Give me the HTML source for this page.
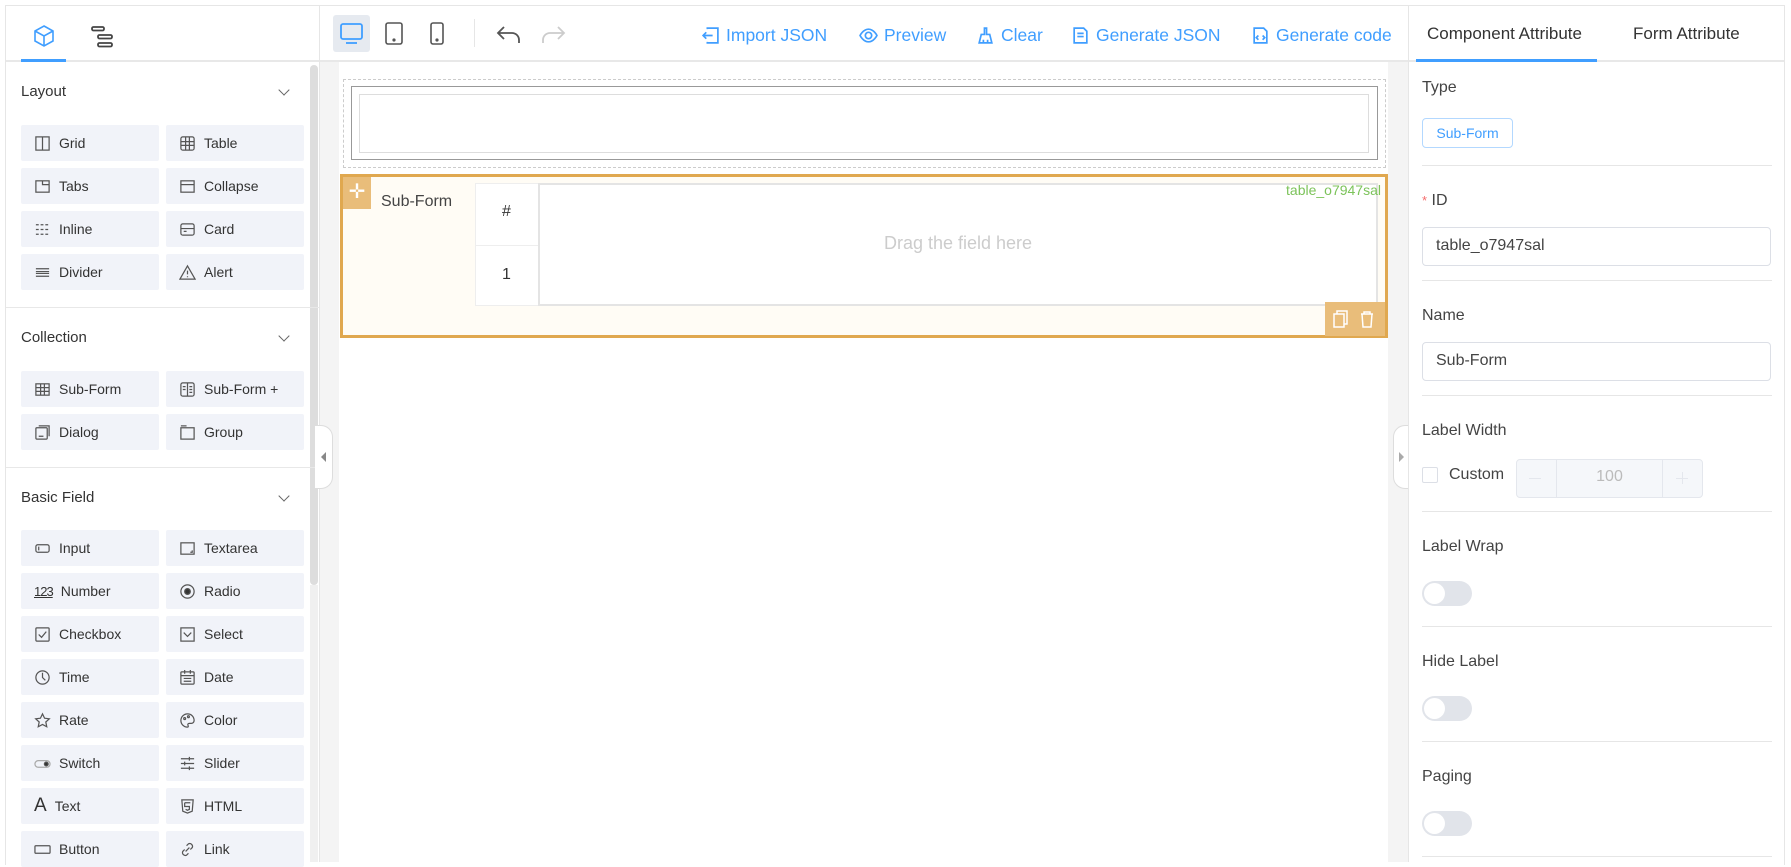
<!DOCTYPE html>
<html><head><meta charset="utf-8"><style>
*{box-sizing:border-box;margin:0;padding:0}
body{width:1791px;height:862px;overflow:hidden;background:#fff;font-family:"Liberation Sans",sans-serif;color:#333;position:relative}
.a{position:absolute}
.btn{position:absolute;width:138px;height:36px;background:#f1f3f9;border-radius:2px;font-size:14px;color:#333;display:flex;align-items:center;padding-left:13px}
.btn svg{width:17px;height:17px;margin-right:8px;fill:none;stroke:#555;stroke-width:1.3}
.sec{position:absolute;left:21px;font-size:15px;color:#333}
.chev{position:absolute;left:280px;width:8px;height:8px;border-right:1.3px solid #666;border-bottom:1.3px solid #666;transform:rotate(45deg)}
.hl{position:absolute;left:6px;width:313px;height:1px;background:#e8e8e8}
.tb{position:absolute;top:25px;font-size:17.5px;color:#409eff;display:flex;align-items:center;white-space:nowrap}
.tb svg{width:19px;height:19px;margin-right:6px;fill:none;stroke:#409eff;stroke-width:1.6}
.lbl{position:absolute;left:1422px;font-size:16px;color:#444}
.sep{position:absolute;left:1422px;width:350px;height:1px;background:#e6e6e6}
.inp{position:absolute;left:1422px;width:349px;height:39px;border:1px solid #dcdfe6;border-radius:4px;font-size:16px;color:#444;padding:9px 0 0 13px}
.sw{position:absolute;left:1422px;width:50px;height:25px;border-radius:13px;background:#e1e4ea}
.sw:after{content:"";position:absolute;left:2px;top:2px;width:21px;height:21px;border-radius:50%;background:#fff}
</style></head><body>
<div class="a" style="left:5px;top:5px;width:1780px;height:860px;border:1px solid #e6e6e6;border-bottom:none"></div>
<div class="a" style="left:319px;top:5px;width:1px;height:857px;background:#e6e6e6"></div>
<div class="a" style="left:6px;top:60px;width:313px;height:2px;background:#e8e8e8"></div>
<div class="a" style="left:21px;top:59px;width:45px;height:3px;background:#409eff"></div>
<svg class="a" style="left:32px;top:24px" width="24" height="24" viewBox="0 0 24 24" fill="none" stroke="#409eff" stroke-width="1.6"><path d="M12 2l9 5v10l-9 5-9-5V7z M3 7l9 5 9-5 M12 12v10"/></svg>
<svg class="a" style="left:90px;top:25px" width="26" height="24" viewBox="0 0 26 24" fill="none" stroke="#444" stroke-width="1.8"><rect x="2" y="2" width="12" height="3.5" rx="1.5"/><rect x="8" y="10" width="14" height="3.5" rx="1.5"/><rect x="8" y="18" width="14" height="3.5" rx="1.5"/></svg>
<div class="a" style="left:310px;top:65px;width:8px;height:520px;background:#ddd;border-radius:4px"></div>
<div class="a" style="left:310px;top:585px;width:8px;height:277px;background:#f0f0f0"></div>

<div class="sec" style="top:83px">Layout</div><div class="chev" style="top:86px"></div>
<div class="btn" style="left:21px;top:125px"><svg viewBox="0 0 18 18"><rect x="2" y="2" width="14" height="14"/><path d="M9 2v14"/></svg>Grid</div>
<div class="btn" style="left:166px;top:125px"><svg viewBox="0 0 18 18"><rect x="2" y="2" width="14" height="14" rx="2"/><path d="M2 7h14M2 11h14M7 2v14M11 2v14"/></svg>Table</div>
<div class="btn" style="left:21px;top:168px"><svg viewBox="0 0 18 18"><rect x="2" y="3" width="14" height="12"/><path d="M9 3v4h7"/></svg>Tabs</div>
<div class="btn" style="left:166px;top:168px"><svg viewBox="0 0 18 18"><rect x="2" y="3" width="14" height="12"/><path d="M2 7h14"/></svg>Collapse</div>
<div class="btn" style="left:21px;top:211px"><svg viewBox="0 0 18 18"><path d="M2 4h14M2 9h14M2 14h14" stroke-dasharray="3 2"/></svg>Inline</div>
<div class="btn" style="left:166px;top:211px"><svg viewBox="0 0 18 18"><rect x="2" y="3" width="14" height="12" rx="2"/><path d="M2 8h14M5 11h3"/></svg>Card</div>
<div class="btn" style="left:21px;top:254px"><svg viewBox="0 0 18 18" stroke-width="1"><path d="M2 5h14M2 8h14M2 10h14M2 13h14"/></svg>Divider</div>
<div class="btn" style="left:166px;top:254px"><svg viewBox="0 0 18 18"><path d="M9 2l8 14H1z M9 7v4 M9 13v1"/></svg>Alert</div>
<div class="hl" style="top:307px"></div>

<div class="sec" style="top:329px">Collection</div><div class="chev" style="top:332px"></div>
<div class="btn" style="left:21px;top:371px"><svg viewBox="0 0 18 18"><rect x="2" y="3" width="14" height="12"/><path d="M2 7h14M2 11h14M7 3v12M11 3v12"/></svg>Sub-Form</div>
<div class="btn" style="left:166px;top:371px"><svg viewBox="0 0 18 18"><rect x="2" y="2" width="14" height="14" rx="2"/><path d="M9 2v14M11 6h3M11 9h3M11 12h3M4 6h3M4 9h3"/></svg>Sub-Form +</div>
<div class="btn" style="left:21px;top:414px"><svg viewBox="0 0 18 18"><rect x="2" y="4" width="12" height="12" rx="1"/><path d="M5 2h11v11M5 13h5"/></svg>Dialog</div>
<div class="btn" style="left:166px;top:414px"><svg viewBox="0 0 18 18"><rect x="2" y="4" width="14" height="12"/><path d="M2 2h6"/></svg>Group</div>
<div class="hl" style="top:467px"></div>

<div class="sec" style="top:489px">Basic Field</div><div class="chev" style="top:492px"></div>
<div class="btn" style="left:21px;top:530px"><svg viewBox="0 0 18 18"><rect x="2" y="5" width="14" height="8" rx="2"/><path d="M5 7v4"/></svg>Input</div>
<div class="btn" style="left:166px;top:530px"><svg viewBox="0 0 18 18"><rect x="2" y="3" width="14" height="12"/><path d="M12 13h2v-2"/></svg>Textarea</div>
<div class="btn" style="left:21px;top:573px"><span style="font-size:13px;text-decoration:underline;margin-right:8px;letter-spacing:-1px">123</span>Number</div>
<div class="btn" style="left:166px;top:573px"><svg viewBox="0 0 18 18"><circle cx="9" cy="9" r="7"/><circle cx="9" cy="9" r="3" fill="#333"/></svg>Radio</div>
<div class="btn" style="left:21px;top:616px"><svg viewBox="0 0 18 18"><rect x="2" y="2" width="14" height="14" rx="1"/><path d="M5 9l3 3 5-6"/></svg>Checkbox</div>
<div class="btn" style="left:166px;top:616px"><svg viewBox="0 0 18 18"><rect x="2" y="2" width="14" height="14"/><path d="M5 7l4 4 4-4"/></svg>Select</div>
<div class="btn" style="left:21px;top:659px"><svg viewBox="0 0 18 18"><circle cx="9" cy="9" r="7"/><path d="M9 4v5l3 3"/></svg>Time</div>
<div class="btn" style="left:166px;top:659px"><svg viewBox="0 0 18 18"><rect x="2" y="3" width="14" height="13" rx="1"/><path d="M2 7h14M6 1v4M12 1v4M5 10h8M5 13h8"/></svg>Date</div>
<div class="btn" style="left:21px;top:702px"><svg viewBox="0 0 18 18"><path d="M9 2l2.2 4.6 5 .6-3.7 3.4 1 5L9 13.2 4.5 15.6l1-5L1.8 7.2l5-.6z"/></svg>Rate</div>
<div class="btn" style="left:166px;top:702px"><svg viewBox="0 0 18 18"><path d="M9 2a7 7 0 100 14c1 0 1-1 .5-2s0-2 1.5-2h2a3 3 0 003-3c0-4-3-7-7-7z"/><circle cx="6" cy="7" r="1"/><circle cx="10" cy="5" r="1"/></svg>Color</div>
<div class="btn" style="left:21px;top:745px"><svg viewBox="0 0 18 18"><rect x="1" y="6" width="16" height="7" rx="3.5" stroke="#aaa"/><circle cx="13" cy="9.5" r="2" fill="#333"/></svg>Switch</div>
<div class="btn" style="left:166px;top:745px"><svg viewBox="0 0 18 18"><path d="M2 4h14M2 9h14M2 14h14M11 2v4M6 7v4M11 12v4"/></svg>Slider</div>
<div class="btn" style="left:21px;top:788px"><span style="font-size:19px;margin-right:8px">A</span>Text</div>
<div class="btn" style="left:166px;top:788px"><svg viewBox="0 0 18 18"><path d="M3 2h12l-1 12-5 2-5-2z M6 5h6M6 5v4h5v3l-2 1-2-1"/></svg>HTML</div>
<div class="btn" style="left:21px;top:831px"><svg viewBox="0 0 18 18"><rect x="1" y="5" width="16" height="8" rx="1"/></svg>Button</div>
<div class="btn" style="left:166px;top:831px"><svg viewBox="0 0 18 18"><path d="M7 11l4-4M8 5l2-2a3 3 0 014 4l-2 2M10 13l-2 2a3 3 0 01-4-4l2-2"/></svg>Link</div>

<div class="a" style="left:320px;top:61px;width:1088px;height:801px;background:#f4f4f4"></div>
<div class="a" style="left:320px;top:60px;width:1088px;height:2px;background:#e8e8e8"></div>
<div class="a" style="left:339px;top:62px;width:1049px;height:800px;background:#fff"></div>
<div class="a" style="left:333px;top:15px;width:37px;height:37px;background:#e6eaf0;border-radius:3px"></div>
<svg class="a" style="left:339px;top:21px" width="25" height="25" viewBox="0 0 25 25" fill="none" stroke="#409eff" stroke-width="1.8"><rect x="2" y="3" width="21" height="15" rx="2"/><path d="M7 22h11"/></svg>
<svg class="a" style="left:384px;top:21px" width="20" height="25" viewBox="0 0 20 25" fill="none" stroke="#555" stroke-width="1.6"><rect x="2" y="2" width="16" height="21" rx="2"/><circle cx="10" cy="19" r=".8" fill="#555"/></svg>
<svg class="a" style="left:429px;top:21px" width="16" height="25" viewBox="0 0 16 25" fill="none" stroke="#555" stroke-width="1.6"><rect x="2" y="2" width="12" height="21" rx="2"/><circle cx="8" cy="19" r=".8" fill="#555"/></svg>
<div class="a" style="left:474px;top:19px;width:1px;height:28px;background:#e6e6e6"></div>
<svg class="a" style="left:496px;top:24px" width="26" height="22" viewBox="0 0 26 22" fill="none" stroke="#555" stroke-width="1.8"><path d="M8 3L2 9l6 6M2 9h14a7 7 0 017 7v3"/></svg>
<svg class="a" style="left:540px;top:24px" width="26" height="22" viewBox="0 0 26 22" fill="none" stroke="#ccc" stroke-width="1.8"><path d="M18 3l6 6-6 6M24 9H10a7 7 0 00-7 7v3"/></svg>
<div class="tb" style="left:701px"><svg viewBox="0 0 18 18"><path d="M6 3V2h10v14H6v-1M11 9H2M5 6L2 9l3 3"/></svg>Import JSON</div>
<div class="tb" style="left:859px"><svg viewBox="0 0 18 18"><path d="M1 9s3-6 8-6 8 6 8 6-3 6-8 6-8-6-8-6z"/><circle cx="9" cy="9" r="3"/></svg>Preview</div>
<div class="tb" style="left:976px"><svg viewBox="0 0 18 18"><path d="M8 2h2v6h3l2 8H3l2-8h3zM7 16v-3M11 16v-3"/></svg>Clear</div>
<div class="tb" style="left:1071px"><svg viewBox="0 0 18 18"><path d="M3 2h9l3 3v11H3z M6 7h6M6 10h6"/></svg>Generate JSON</div>
<div class="tb" style="left:1251px"><svg viewBox="0 0 18 18"><path d="M3 2h9l3 3v11H3z M7 9l-2 2 2 2M11 9l2 2-2 2"/></svg>Generate code</div>

<div class="a" style="left:343px;top:79px;width:1043px;height:89px;border:1px dashed #ccc"></div>
<div class="a" style="left:351px;top:86px;width:1027px;height:74px;border:1px solid #999"></div>
<div class="a" style="left:359px;top:94px;width:1010px;height:59px;border:1px solid #ddd"></div>
<div class="a" style="left:340px;top:174px;width:1048px;height:164px;border:3px solid #e0a84f;background:#fffcf5"></div>
<div class="a" style="left:343px;top:177px;width:28px;height:32px;background:#e9bd7a;color:#fff;font-size:20px;text-align:center;line-height:30px">✛</div>
<div class="a" style="left:381px;top:193px;font-size:16px;color:#444">Sub-Form</div>
<div class="a" style="left:475px;top:183px;width:64px;height:123px;background:#fff;border:1px solid #eee"></div>
<div class="a" style="left:475px;top:245px;width:64px;height:1px;background:#eee"></div>
<div class="a" style="left:475px;top:203px;width:63px;text-align:center;font-size:16px">#</div>
<div class="a" style="left:475px;top:266px;width:63px;text-align:center;font-size:16px">1</div>
<div class="a" style="left:538px;top:183px;width:840px;height:123px;background:#fff;border:2px solid #e4e4e4"></div>
<div class="a" style="left:538px;top:233px;width:840px;text-align:center;font-size:18px;color:#ccc">Drag the field here</div>
<div class="a" style="left:1200px;top:182px;width:181px;text-align:right;font-size:14px;color:#7cc35a">table_o7947sal</div>
<div class="a" style="left:1325px;top:302px;width:60px;height:34px;background:#e9bd7a"></div>
<svg class="a" style="left:1330px;top:309px" width="50" height="20" viewBox="0 0 50 20" fill="none" stroke="#fff" stroke-width="1.5"><rect x="4" y="5" width="10" height="13"/><path d="M7 5V2h10v13h-3"/><path d="M31 5h12M34 5V3h6v2M32 5l1 13h8l1-13"/></svg>
<div class="a" style="left:315px;top:425px;width:18px;height:64px;border:1px solid #ddd;border-left:none;border-radius:0 12px 12px 0;background:#fff"></div>
<div class="a" style="left:321px;top:452px;width:0;height:0;border-top:5px solid transparent;border-bottom:5px solid transparent;border-right:5px solid #888"></div>
<div class="a" style="left:1393px;top:425px;width:16px;height:64px;border:1px solid #ddd;border-right:none;border-radius:12px 0 0 12px;background:#fff"></div>
<div class="a" style="left:1399px;top:452px;width:0;height:0;border-top:5px solid transparent;border-bottom:5px solid transparent;border-left:5px solid #aaa"></div>

<div class="a" style="left:1408px;top:5px;width:1px;height:857px;background:#e6e6e6"></div>
<div class="a" style="left:1409px;top:60px;width:375px;height:2px;background:#e8e8e8"></div>
<div class="a" style="left:1416px;top:59px;width:181px;height:3px;background:#409eff"></div>
<div class="a" style="left:1427px;top:24px;font-size:17px;color:#333">Component Attribute</div>
<div class="a" style="left:1633px;top:24px;font-size:17px;color:#333">Form Attribute</div>
<div class="lbl" style="top:79px">Type</div>
<div class="a" style="left:1422px;top:118px;width:91px;height:30px;border:1px solid #b3d8ff;border-radius:4px;background:#fff;color:#409eff;font-size:14px;text-align:center;line-height:28px">Sub-Form</div>
<div class="sep" style="top:165px"></div>
<div class="lbl" style="top:192px"><span style="color:#f56c6c;font-size:13px">*</span> ID</div>
<div class="inp" style="top:227px">table_o7947sal</div>
<div class="sep" style="top:280px"></div>
<div class="lbl" style="top:307px">Name</div>
<div class="inp" style="top:342px">Sub-Form</div>
<div class="sep" style="top:395px"></div>
<div class="lbl" style="top:422px">Label Width</div>
<div class="a" style="left:1422px;top:467px;width:16px;height:16px;border:1px solid #dcdfe6;border-radius:2px"></div>
<div class="a" style="left:1449px;top:466px;font-size:16px;color:#444">Custom</div>
<div class="a" style="left:1516px;top:459px;width:187px;height:39px;border:1px solid #e4e7ed;border-radius:4px;background:#f5f7fa"></div>
<div class="a" style="left:1556px;top:460px;width:1px;height:37px;background:#e4e7ed"></div>
<div class="a" style="left:1662px;top:460px;width:1px;height:37px;background:#e4e7ed"></div>
<div class="a" style="left:1557px;top:468px;width:105px;text-align:center;font-size:16px;color:#bbb">100</div>
<div class="a" style="left:1529px;top:478px;width:12px;height:1px;background:#e4e7ed"></div>
<div class="a" style="left:1676px;top:478px;width:12px;height:1px;background:#e4e7ed"></div>
<div class="a" style="left:1682px;top:472px;width:1px;height:12px;background:#e4e7ed"></div>
<div class="sep" style="top:511px"></div>
<div class="lbl" style="top:538px">Label Wrap</div>
<div class="sw" style="top:581px"></div>
<div class="sep" style="top:626px"></div>
<div class="lbl" style="top:653px">Hide Label</div>
<div class="sw" style="top:696px"></div>
<div class="sep" style="top:741px"></div>
<div class="lbl" style="top:768px">Paging</div>
<div class="sw" style="top:811px"></div>
<div class="sep" style="top:856px"></div>
</body></html>
